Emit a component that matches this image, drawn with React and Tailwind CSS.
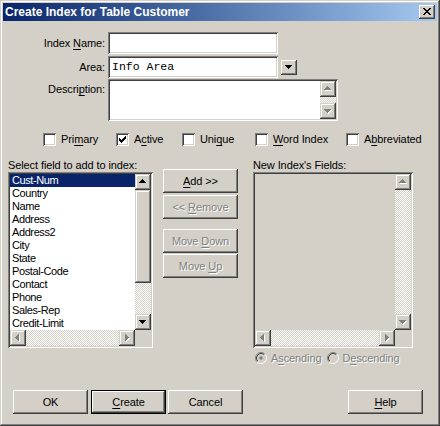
const raised = 'shadow-[inset_-1px_-1px_#404040,inset_1px_1px_#fff,inset_-2px_-2px_#808080,inset_2px_2px_#d4d0c8]';
const sbRaised = 'shadow-[inset_-1px_-1px_#404040,inset_1px_1px_#d4d0c8,inset_-2px_-2px_#808080,inset_2px_2px_#fff]';
const sunken = 'shadow-[inset_1px_1px_#808080,inset_-1px_-1px_#fff,inset_2px_2px_#404040,inset_-2px_-2px_#d4d0c8]';
const checker = 'bg-[repeating-conic-gradient(#fff_0_25%,#d4d0c8_0_50%)] bg-[length:2px_2px]';
const grayText = 'text-[#808080] [text-shadow:1px_1px_0_#fff]';

const ARROWS = {
  down: ['#######', '.#####.', '..###..', '...#...'],
  up: ['...#...', '..###..', '.#####.', '#######'],
  left: ['...#', '..##', '.###', '####', '.###', '..##', '...#'],
  right: ['#...', '##..', '###.', '####', '###.', '##..', '#...'],
};
const ARROW_PAD = {
  down: 'pl-[4px] pt-[6px]',
  up: 'pl-[4px] pt-[5px]',
  left: 'pl-[5px] pt-[4px]',
  right: 'pl-[6px] pt-[4px]',
};
const CLOSE = ['##....##', '.##..##.', '..####..', '...##...', '..####..', '.##..##.', '##....##'];
const CHECK = ['......#', '.....##', '#...###', '##.###.', '#####..', '.###...', '..#....'];

const fields = ['Cust-Num', 'Country', 'Name', 'Address', 'Address2', 'City', 'State', 'Postal-Code', 'Contact', 'Phone', 'Sales-Rep', 'Credit-Limit'];

function Pix({ rows, color, className = '' }) {
  const w = rows[0].length;
  const h = rows.length;
  return (
    <svg width={w} height={h} viewBox={`0 0 ${w} ${h}`} shapeRendering="crispEdges" className={`block ${className}`}>
      {rows.flatMap((r, y) =>
        r.split('').map((c, x) => (c === '#' ? <rect key={`${x}-${y}`} x={x} y={y} width="1" height="1" fill={color} /> : null))
      )}
    </svg>
  );
}

function Glyph({ rows, disabled }) {
  if (!disabled) return <Pix rows={rows} color="#000" />;
  return (
    <span className="relative block">
      <Pix rows={rows} color="#fff" className="absolute left-px top-px" />
      <Pix rows={rows} color="#808080" className="relative" />
    </span>
  );
}

function ArrowBtn({ dir, disabled }) {
  return (
    <div className={`w-4 h-4 shrink-0 bg-[#d4d0c8] flex items-start justify-start ${ARROW_PAD[dir]} ${sbRaised}`}>
      <Glyph rows={ARROWS[dir]} disabled={disabled} />
    </div>
  );
}

function Ul({ children }) {
  return <span className="underline underline-offset-[2px]">{children}</span>;
}

function Button({ children, disabled, isDefault, className = '' }) {
  return (
    <button
      type="button"
      className={`w-[75px] h-[24px] bg-[#d4d0c8] text-[11px] flex items-center justify-center ${raised} ${isDefault ? 'border border-black' : ''} ${disabled ? grayText : 'text-black'} ${className}`}
    >
      {children}
    </button>
  );
}

function Checkbox({ checked, label, width }) {
  return (
    <div className={`flex items-center h-[13px] ${width}`}>
      <div className={`w-[13px] h-[13px] bg-white pl-[3px] pt-[3px] ${sunken}`}>
        {checked && <Pix rows={CHECK} color="#000" />}
      </div>
      <span className="ml-[5px] leading-[13px]">{label}</span>
    </div>
  );
}

function Radio({ selected, label }) {
  return (
    <div className="flex items-center">
      <svg width="12" height="12" viewBox="0 0 12 12" className="block">
        <circle cx="6" cy="6" r="4.5" fill="#d4d0c8" />
        <path d="M2.11 9.89 A5.5 5.5 0 0 1 9.89 2.11" fill="none" stroke="#808080" />
        <path d="M9.89 2.11 A5.5 5.5 0 0 1 2.11 9.89" fill="none" stroke="#fff" />
        <path d="M2.82 9.18 A4.5 4.5 0 0 1 9.18 2.82" fill="none" stroke="#404040" />
        <path d="M9.18 2.82 A4.5 4.5 0 0 1 2.82 9.18" fill="none" stroke="#d4d0c8" />
        {selected && <circle cx="6" cy="6" r="1.8" fill="#808080" />}
      </svg>
      <span className={`ml-[4px] leading-[13px] ${grayText}`}>{label}</span>
    </div>
  );
}

export default function App() {
  return (
    <div className={`w-[440px] h-[426px] bg-[#d4d0c8] p-[3px] flex flex-col text-[11px] tracking-[-0.1px] text-black font-['Liberation_Sans',Arial,sans-serif] ${sbRaised}`}>
      {/* title bar */}
      <div className="h-[18px] flex items-center justify-between pl-[2px] pr-[2px] bg-linear-to-r from-[#0a246a] to-[#a6caf0]">
        <span className="text-white font-bold text-[12px] tracking-normal leading-[18px]">Create Index for Table Customer</span>
        <div className={`w-4 h-[14px] bg-[#d4d0c8] pl-[4px] pt-[3px] ${raised}`}>
          <Pix rows={CLOSE} color="#000" />
        </div>
      </div>

      {/* name / area / description */}
      <div className="flex items-center mt-[11px]">
        <label className="w-[102px] text-right leading-[13px]">
          Index <Ul>N</Ul>ame:
        </label>
        <div className={`ml-[3px] w-[170px] h-[22px] bg-white ${sunken}`} />
      </div>
      <div className="flex items-center mt-[2px]">
        <label className="w-[102px] text-right leading-[13px]">Area:</label>
        <div className={`ml-[3px] w-[170px] h-[22px] bg-white flex items-center pl-[4px] ${sunken}`}>
          <span className="font-['Liberation_Mono','Courier_New',monospace] text-[11.5px] tracking-normal">Info Area</span>
        </div>
        <div className={`ml-[3px] w-4 h-[15px] bg-[#d4d0c8] pl-[4px] pt-[5px] ${raised}`}>
          <Pix rows={ARROWS.down} color="#000" />
        </div>
      </div>
      <div className="flex items-start mt-[1px]">
        <label className="w-[102px] text-right leading-[13px] pt-[4px]">
          Descri<Ul>p</Ul>tion:
        </label>
        <div className={`ml-[3px] w-[230px] h-[42px] bg-white p-[2px] flex ${sunken}`}>
          <div className="flex-1" />
          <div className="w-4 flex flex-col">
            <ArrowBtn dir="up" disabled />
            <div className={`flex-1 ${checker}`} />
            <ArrowBtn dir="down" disabled />
          </div>
        </div>
      </div>

      {/* options */}
      <div className="flex mt-[12px] pl-[40px]">
        <Checkbox width="w-[73px]" label={<>Pri<Ul>m</Ul>ary</>} />
        <Checkbox width="w-[66px]" checked label={<>A<Ul>c</Ul>tive</>} />
        <Checkbox width="w-[73px]" label={<>Uni<Ul>q</Ul>ue</>} />
        <Checkbox width="w-[91px]" label={<><Ul>W</Ul>ord Index</>} />
        <Checkbox label={<>A<Ul>b</Ul>breviated</>} />
      </div>

      {/* field lists */}
      <div className="flex mt-[13px] pl-[5px]">
        <div className="w-[145px] flex flex-col">
          <div className="h-[13px] leading-[13px]">Select field to add to index:</div>
          <div className={`w-[145px] h-[176px] bg-white p-[2px] ${sunken}`}>
            <div className="flex h-[156px]">
              <div className="w-[125px] overflow-hidden">
                {fields.map((f, i) => (
                  <div
                    key={f}
                    className={`h-[13px] leading-[13px] pl-[2px] tracking-[-0.4px] ${i === 0 ? 'bg-[#0a246a] text-white' : 'text-black'}`}
                  >
                    {f}
                  </div>
                ))}
              </div>
              <div className="w-4 flex flex-col">
                <ArrowBtn dir="up" />
                <div className={`h-[93px] shrink-0 bg-[#d4d0c8] ${sbRaised}`} />
                <div className={`flex-1 ${checker}`} />
                <ArrowBtn dir="down" />
              </div>
            </div>
            <div className="flex h-4">
              <ArrowBtn dir="left" disabled />
              <div className={`flex-1 ${checker}`} />
              <ArrowBtn dir="right" disabled />
              <div className="w-4 bg-[#d4d0c8]" />
            </div>
          </div>
        </div>

        <div className="ml-[10px] w-[75px] flex flex-col pt-[10px]">
          <Button>
            <span><Ul>A</Ul>dd &gt;&gt;</span>
          </Button>
          <Button disabled className="mt-[2px]">
            <span>&lt;&lt; <Ul>R</Ul>emove</span>
          </Button>
          <Button disabled className="mt-[10px]">
            <span>Move <Ul>D</Ul>own</span>
          </Button>
          <Button disabled className="mt-[1px]">
            <span>Move <Ul>U</Ul>p</span>
          </Button>
        </div>

        <div className="ml-[15px] w-[160px] flex flex-col">
          <div className="h-[13px] leading-[13px]">New Index's Fields:</div>
          <div className={`w-[160px] h-[176px] bg-[#d4d0c8] p-[2px] ${sunken}`}>
            <div className="flex h-[156px]">
              <div className="flex-1" />
              <div className="w-4 flex flex-col">
                <ArrowBtn dir="up" disabled />
                <div className={`flex-1 ${checker}`} />
                <ArrowBtn dir="down" disabled />
              </div>
            </div>
            <div className="flex h-4">
              <ArrowBtn dir="left" disabled />
              <div className={`flex-1 ${checker}`} />
              <ArrowBtn dir="right" disabled />
              <div className="w-4 bg-[#d4d0c8]" />
            </div>
          </div>
          <div className="flex items-center h-[14px] mt-[3px] pl-[2px]">
            <Radio selected label={<>A<Ul>s</Ul>cending</>} />
            <div className="ml-[5px]">
              <Radio label={<>D<Ul>e</Ul>scending</>} />
            </div>
          </div>
        </div>
      </div>

      {/* dialog buttons */}
      <div className="flex mt-[25px] pl-[10px]">
        <Button>OK</Button>
        <Button isDefault className="ml-[3px]">
          <span><Ul>C</Ul>reate</span>
        </Button>
        <Button className="ml-[2px]">Cancel</Button>
        <Button className="ml-[105px]">
          <span><Ul>H</Ul>elp</span>
        </Button>
      </div>
    </div>
  );
}
